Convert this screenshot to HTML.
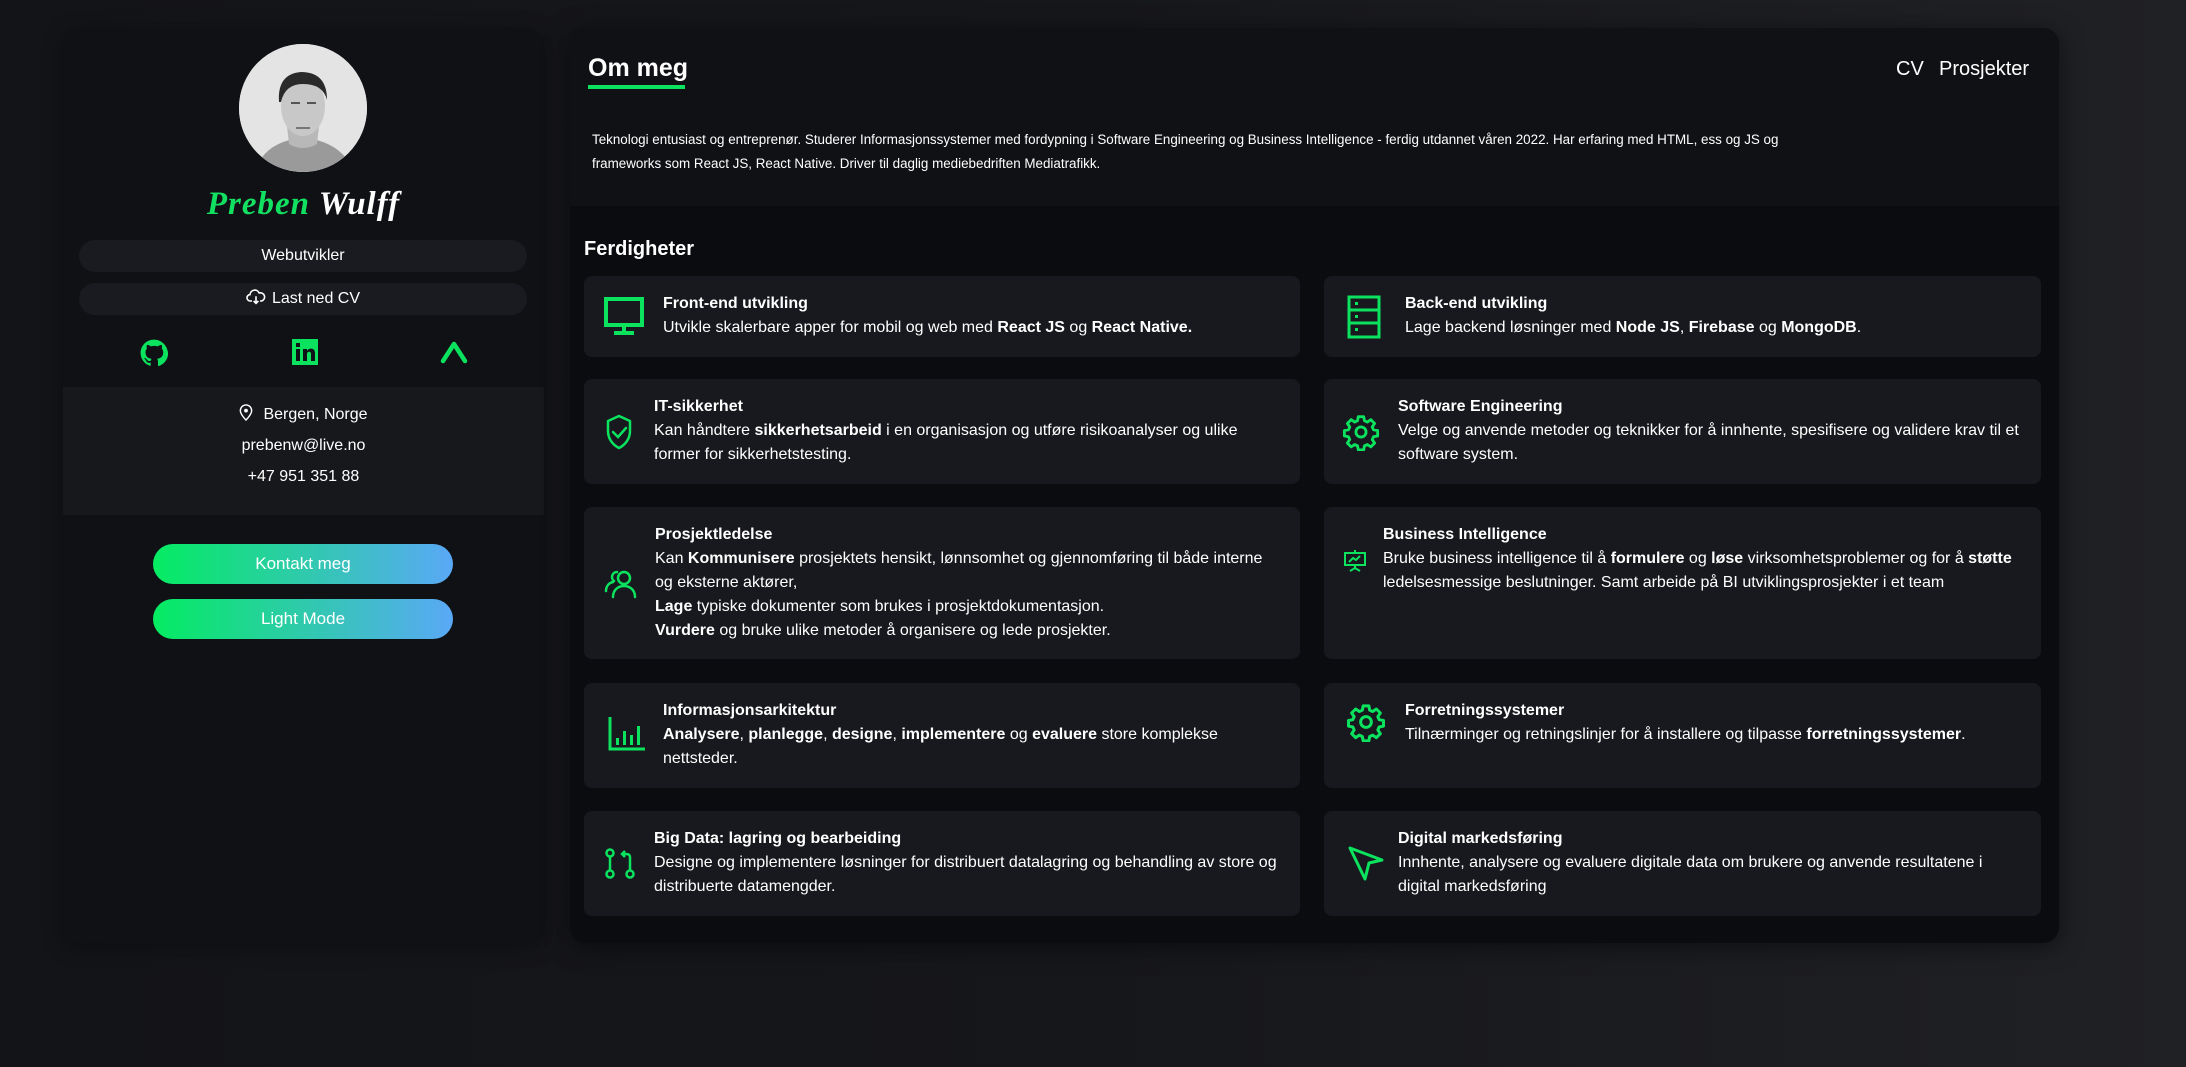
<!DOCTYPE html>
<html><head><meta charset="utf-8">
<style>
*{margin:0;padding:0;box-sizing:border-box}
body{width:2186px;height:1067px;overflow:hidden;background:linear-gradient(90deg,#131418 0%,#16171b 50%,#202125 100%);font-family:"Liberation Sans",Arial,sans-serif;color:#fff;position:relative}
.side{position:absolute;left:63px;top:28px;width:481px;height:915px;background:#101115;border-radius:16px;box-shadow:0 4px 20px rgba(0,0,0,.35);overflow:hidden}
.avatar{position:absolute;left:176px;top:16px;width:128px;height:128px;border-radius:50%;background:#e6e6e6;overflow:hidden}
.name{position:absolute;left:0;width:481px;text-align:center;font-family:"Liberation Serif",cursive;font-style:italic;font-weight:bold;font-size:33px;letter-spacing:1px}
.pill{position:absolute;left:16px;width:448px;height:32px;border-radius:16px;background:#1a1b20;text-align:center;font-size:16px;line-height:32px}
.icons svg{position:absolute}
.contact{position:absolute;left:0;top:359px;width:481px;height:128px;background:#17181c;text-align:center;font-size:16px}
.contact div{position:absolute;left:0;width:481px}
.btn{position:absolute;left:90px;width:300px;height:40px;border-radius:20px;background:linear-gradient(90deg,#04ec62,#5aa8f6);text-align:center;line-height:40px;font-size:17px}
.main{position:absolute;left:570px;top:28px;width:1489px;height:915px;background:#0b0c0f;border-radius:16px;box-shadow:0 4px 24px rgba(0,0,0,.5);overflow:hidden}
.top{position:absolute;left:0;top:0;width:1489px;height:178px;background:#101115}
.card{position:absolute;background:#18191e;border-radius:8px;font-size:16px;line-height:24px;white-space:nowrap}
.card .t{position:absolute;top:16px}
.card b{font-weight:bold}
.card svg{position:absolute}
</style></head><body>
<div class="side">
  <div class="avatar">
    <svg width="128" height="128" viewBox="0 0 128 128">
      <rect width="128" height="128" fill="#e4e4e4"/>
      <path d="M20 118 Q30 100 55 95 L73 95 Q98 100 110 118 L110 128 L20 128Z" fill="#9a9a9a"/>
      <path d="M48 82 L50 100 Q64 108 78 100 L80 82Z" fill="#b8b8b8"/>
      <ellipse cx="64" cy="62" rx="22" ry="30" fill="#c8c8c8"/>
      <path d="M40 58 Q38 30 62 28 Q88 28 88 56 Q84 40 64 40 Q46 40 42 58Z" fill="#2a2a2a"/>
      <rect x="52" y="58" width="9" height="2" fill="#555"/><rect x="68" y="58" width="9" height="2" fill="#555"/>
      <rect x="57" y="83" width="14" height="2" fill="#777"/>
    </svg>
  </div>
  <div class="name" style="top:158px"><span style="color:#12e061">Preben</span> <span>Wulff</span></div>
  <div class="pill" style="top:212px">Webutvikler</div>
  <div class="pill" style="top:255px"><svg width="20" height="16" viewBox="0 0 24 20" style="vertical-align:-2px;margin-right:6px"><path d="M7 15H5a4 4 0 0 1-.5-8A6 6 0 0 1 16 5a4.5 4.5 0 0 1 3 10h-2" fill="none" stroke="#fff" stroke-width="2"/><path d="M12 9v9M9 15l3 3 3-3" fill="none" stroke="#fff" stroke-width="2"/></svg>Last ned CV</div>
  <div class="icons">
    <svg style="left:77px;top:311px" width="28" height="28" viewBox="0 0 24 24"><path fill="#0be35f" d="M12 .5C5.6.5.5 5.6.5 12c0 5.1 3.3 9.4 7.900 10.900.6.1.8-.2.8-.6v-2c-3.2.7-3.9-1.5-3.9-1.5-.5-1.3-1.3-1.7-1.3-1.7-1-.7.1-.7.1-.7 1.2.1 1.8 1.2 1.8 1.2 1 1.8 2.8 1.3 3.4 1 .1-.8.4-1.3.7-1.6-2.6-.3-5.3-1.3-5.3-5.7 0-1.3.5-2.3 1.2-3.1-.1-.3-.5-1.5.1-3.1 0 0 1-.3 3.3 1.2a11.5 11.5 0 0 1 6 0c2.3-1.5 3.3-1.2 3.3-1.2.6 1.6.2 2.8.1 3.1.8.8 1.2 1.8 1.2 3.1 0 4.4-2.7 5.4-5.3 5.7.4.4.8 1.1.8 2.2v3.3c0 .3.2.7.8.6 4.6-1.5 7.9-5.8 7.9-10.9C23.5 5.6 18.4.5 12 .5z"/></svg>
    <svg style="left:229px;top:311px" width="26" height="26" viewBox="0 0 26 26"><rect width="26" height="26" fill="#0be35f"/><rect x="4" y="10" width="4" height="12" fill="#101115"/><rect x="4" y="4" width="4" height="4" fill="#101115"/><path d="M11 10h4v2c1-2 3-2.4 4-2.4 3 0 4 2 4 5V22h-4v-7c0-1.5-.5-2.3-1.8-2.3S15 13.5 15 15v7h-4z" fill="#101115"/></svg>
    <svg style="left:377px;top:311px" width="28" height="26" viewBox="0 0 28 26"><path d="M3 22L14 5l11 17" fill="none" stroke="#0be35f" stroke-width="4.5" stroke-linecap="round" stroke-linejoin="round"/></svg>
  </div>
  <div class="contact">
    <div style="top:17px"><svg width="14" height="17" viewBox="0 0 14 18" style="vertical-align:-2px;margin-right:10px"><path d="M7 17s6-6 6-10A6 6 0 0 0 1 7c0 4 6 10 6 10z" fill="none" stroke="#fff" stroke-width="1.5"/><circle cx="7" cy="7" r="2" fill="#fff"/></svg>Bergen, Norge</div>
    <div style="top:50px">prebenw@live.no</div>
    <div style="top:81px">+47 951 351 88</div>
  </div>
  <div class="btn" style="top:516px">Kontakt meg</div>
  <div class="btn" style="top:571px">Light Mode</div>
</div>

<div class="main">
  <div class="top">
    <div style="position:absolute;left:18px;top:26px;font-size:25px;font-weight:bold">Om meg</div>
    <div style="position:absolute;left:18px;top:57px;width:97px;height:4px;background:#0be35f"></div>
    <div style="position:absolute;left:1326px;top:30px;font-size:20px">CV</div>
    <div style="position:absolute;left:1369px;top:30px;font-size:20px">Prosjekter</div>
    <div style="position:absolute;left:22px;top:100px;font-size:13.4px;line-height:24px;white-space:nowrap">Teknologi entusiast og entreprenør. Studerer Informasjonssystemer med fordypning i Software Engineering og Business Intelligence - ferdig utdannet våren 2022. Har erfaring med HTML, ess og JS og<br>frameworks som React JS, React Native. Driver til daglig mediebedriften Mediatrafikk.</div>
  </div>
  <div style="position:absolute;left:14px;top:210px;font-size:20px;font-weight:bold">Ferdigheter</div>

  <div class="card" style="left:14px;top:248px;width:716px;height:81px">
    <svg style="left:20px;top:21px" width="40" height="40" viewBox="0 0 40 40"><rect x="2" y="2" width="36" height="26" fill="none" stroke="#0be35f" stroke-width="4"/><rect x="18" y="28" width="4" height="6" fill="#0be35f"/><rect x="10" y="34" width="20" height="4" fill="#0be35f"/></svg>
    <div class="t" style="left:79px"><b>Front-end utvikling</b><br>Utvikle skalerbare apper for mobil og web med <b>React JS</b> og <b>React Native.</b></div>
  </div>
  <div class="card" style="left:754px;top:248px;width:717px;height:81px">
    <svg style="left:23px;top:19px" width="34" height="44" viewBox="0 0 34 44"><rect x="2" y="2" width="30" height="40" fill="none" stroke="#0be35f" stroke-width="3"/><path d="M2 15h30M2 28h30" stroke="#0be35f" stroke-width="3"/><rect x="8" y="7" width="3" height="3" fill="#0be35f"/><rect x="8" y="20" width="3" height="3" fill="#0be35f"/><rect x="8" y="33" width="3" height="3" fill="#0be35f"/></svg>
    <div class="t" style="left:81px"><b>Back-end utvikling</b><br>Lage backend løsninger med <b>Node JS</b>, <b>Firebase</b> og <b>MongoDB</b>.</div>
  </div>

  <div class="card" style="left:14px;top:351px;width:716px;height:105px">
    <svg style="left:21px;top:35px" width="28" height="36" viewBox="0 0 28 36"><path d="M14 2L3 7v10c0 8 5 14 11 17 6-3 11-9 11-17V7z" fill="none" stroke="#0be35f" stroke-width="2.5" stroke-linejoin="round"/><path d="M8 18l5 5 8-9" fill="none" stroke="#0be35f" stroke-width="2.5" stroke-linecap="round"/></svg>
    <div class="t" style="left:70px"><b>IT-sikkerhet</b><br>Kan håndtere <b>sikkerhetsarbeid</b> i en organisasjon og utføre risikoanalyser og ulike<br>former for sikkerhetstesting.</div>
  </div>
  <div class="card" style="left:754px;top:351px;width:717px;height:105px">
    <svg style="left:18px;top:34px" width="38" height="38" viewBox="0 0 24 24"><path d="M10.3 2.3h3.4l.5 2.6 1.8.8 2.2-1.5 2.4 2.4-1.5 2.2.8 1.8 2.6.5v3.4l-2.6.5-.8 1.8 1.5 2.2-2.4 2.4-2.2-1.5-1.8.8-.5 2.6h-3.4l-.5-2.6-1.8-.8-2.2 1.5-2.4-2.4 1.5-2.2-.8-1.8-2.6-.5v-3.4l2.6-.5.8-1.8-1.5-2.2 2.4-2.4 2.2 1.5 1.8-.8z" fill="none" stroke="#0be35f" stroke-width="1.8" stroke-linejoin="round"/><circle cx="12" cy="12" r="3.2" fill="none" stroke="#0be35f" stroke-width="1.8"/></svg>
    <div class="t" style="left:74px"><b>Software Engineering</b><br>Velge og anvende metoder og teknikker for å innhente, spesifisere og validere krav til et<br>software system.</div>
  </div>

  <div class="card" style="left:14px;top:479px;width:716px;height:152px">
    <svg style="left:20px;top:58px" width="34" height="34" viewBox="0 0 34 34"><circle cx="20" cy="13" r="6" fill="none" stroke="#0be35f" stroke-width="2.5"/><path d="M9 32c0-7 5-11 11-11s11 4 11 11" fill="none" stroke="#0be35f" stroke-width="2.5" stroke-linecap="round"/><path d="M13 7a5 5 0 0 0-3 9M2 26c0-5 3-8 7-9" fill="none" stroke="#0be35f" stroke-width="2.5" stroke-linecap="round"/></svg>
    <div class="t" style="left:71px"><b>Prosjektledelse</b><br>Kan <b>Kommunisere</b> prosjektets hensikt, lønnsomhet og gjennomføring til både interne<br>og eksterne aktører,<br><b>Lage</b> typiske dokumenter som brukes i prosjektdokumentasjon.<br><b>Vurdere</b> og bruke ulike metoder å organisere og lede prosjekter.</div>
  </div>
  <div class="card" style="left:754px;top:479px;width:717px;height:152px">
    <svg style="left:19px;top:42px" width="24" height="24" viewBox="0 0 24 24"><rect x="2" y="4" width="20" height="12" fill="none" stroke="#0be35f" stroke-width="2"/><path d="M12 1v3M12 16v3M7 22l5-3 5 3M6 13l4-4 3 2 4-4" fill="none" stroke="#0be35f" stroke-width="2"/></svg>
    <div class="t" style="left:59px"><b>Business Intelligence</b><br>Bruke business intelligence til å <b>formulere</b> og <b>løse</b> virksomhetsproblemer og for å <b>støtte</b><br>ledelsesmessige beslutninger. Samt arbeide på BI utviklingsprosjekter i et team</div>
  </div>

  <div class="card" style="left:14px;top:655px;width:716px;height:105px">
    <svg style="left:24px;top:34px" width="37" height="34" viewBox="0 0 37 34"><path d="M2 0v32h35" fill="none" stroke="#0be35f" stroke-width="3"/><rect x="8" y="21" width="3" height="7" fill="#0be35f"/><rect x="15" y="14" width="3" height="14" fill="#0be35f"/><rect x="22" y="18" width="3" height="10" fill="#0be35f"/><rect x="29" y="9" width="3" height="19" fill="#0be35f"/></svg>
    <div class="t" style="left:79px"><b>Informasjonsarkitektur</b><br><b>Analysere</b>, <b>planlegge</b>, <b>designe</b>, <b>implementere</b> og <b>evaluere</b> store komplekse<br>nettsteder.</div>
  </div>
  <div class="card" style="left:754px;top:655px;width:717px;height:105px">
    <svg style="left:22px;top:19px" width="40" height="40" viewBox="0 0 24 24"><path d="M10.3 2.3h3.4l.5 2.6 1.8.8 2.2-1.5 2.4 2.4-1.5 2.2.8 1.8 2.6.5v3.4l-2.6.5-.8 1.8 1.5 2.2-2.4 2.4-2.2-1.5-1.8.8-.5 2.6h-3.4l-.5-2.6-1.8-.8-2.2 1.5-2.4-2.4 1.5-2.2-.8-1.8-2.6-.5v-3.4l2.6-.5.8-1.8-1.5-2.2 2.4-2.4 2.2 1.5 1.8-.8z" fill="none" stroke="#0be35f" stroke-width="1.8" stroke-linejoin="round"/><circle cx="12" cy="12" r="3.2" fill="none" stroke="#0be35f" stroke-width="1.8"/></svg>
    <div class="t" style="left:81px"><b>Forretningssystemer</b><br>Tilnærminger og retningslinjer for å installere og tilpasse <b>forretningssystemer</b>.</div>
  </div>

  <div class="card" style="left:14px;top:783px;width:716px;height:105px">
    <svg style="left:20px;top:37px" width="32" height="32" viewBox="0 0 32 32"><circle cx="6" cy="5" r="3.5" fill="none" stroke="#0be35f" stroke-width="2.5"/><circle cx="6" cy="26" r="3.5" fill="none" stroke="#0be35f" stroke-width="2.5"/><circle cx="26" cy="26" r="3.5" fill="none" stroke="#0be35f" stroke-width="2.5"/><path d="M6 9v13M26 22V9q0-3-4-3h-3M21 3l-3 3 3 3" fill="none" stroke="#0be35f" stroke-width="2.5"/></svg>
    <div class="t" style="left:70px"><b>Big Data: lagring og bearbeiding</b><br>Designe og implementere løsninger for distribuert datalagring og behandling av store og<br>distribuerte datamengder.</div>
  </div>
  <div class="card" style="left:754px;top:783px;width:717px;height:105px">
    <svg style="left:24px;top:35px" width="36" height="36" viewBox="0 0 36 36"><path d="M2 2l32 12-13 3-4 16z" fill="none" stroke="#0be35f" stroke-width="3" stroke-linejoin="round"/></svg>
    <div class="t" style="left:74px"><b>Digital markedsføring</b><br>Innhente, analysere og evaluere digitale data om brukere og anvende resultatene i<br>digital markedsføring</div>
  </div>
</div>
</body></html>
